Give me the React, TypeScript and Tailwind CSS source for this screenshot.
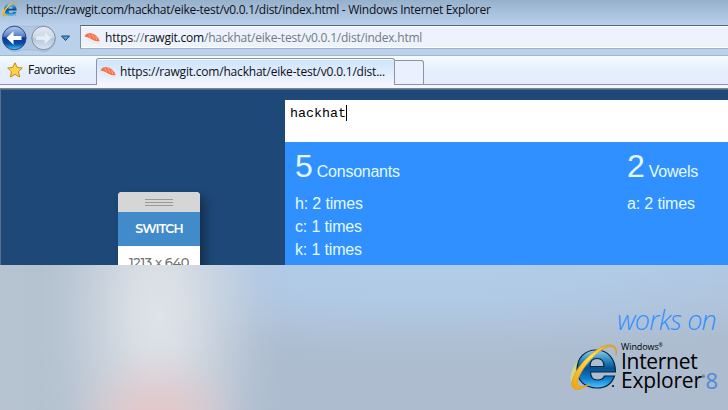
import React from "react";

const Sushi = () => (
  <svg width="16" height="14" viewBox="0 0 16 14" className="shrink-0">
    <path d="M1.5 6 Q3 8.5 7 10.5 Q12 13 15.3 11.5 L15 9 Q9 9 2 5Z" fill="#f6f1ee" stroke="#d8cfd0" strokeWidth=".4" />
    <path d="M.6 5.6 Q1.5 2 6 2 Q13 2.6 15.6 10 Q12.5 11 8.8 9 Q5 6.3 .6 5.6Z" fill="#f3734f" />
    <path d="M4.5 2.6 L6.8 6.4 M8 2.8 L10.2 8 M11.5 4.6 L12.8 9" stroke="#ffb094" strokeWidth=".8" />
  </svg>
);

const IELogo = ({ size, id }: { size: number; id: string }) => (
  <svg width={size} height={size} viewBox="0 0 50 50" className="shrink-0">
    <defs>
      <linearGradient id={id + "b"} x1="0" y1="0" x2="0" y2="1">
        <stop offset="0" stopColor="#8fd0ec" />
        <stop offset=".25" stopColor="#2f8fc8" />
        <stop offset=".48" stopColor="#07508f" />
        <stop offset=".75" stopColor="#0b7dd0" />
        <stop offset="1" stopColor="#4fc8fb" />
      </linearGradient>
      <linearGradient id={id + "g"} x1="1" y1="0" x2="0" y2="1">
        <stop offset="0" stopColor="#e59a10" />
        <stop offset=".4" stopColor="#ffe15a" />
        <stop offset="1" stopColor="#f0a20c" />
      </linearGradient>
    </defs>
    <path d="M9 17 C1 27 -2 37 3 42 L12 32Z" fill="#d8df78" opacity=".8" />
    <path
      fillRule="evenodd"
      d="M26 8 C38 8 45.5 17 45.5 30 L20.500 30 C20.500 35.500 23.500 38 27.500 38 C31.500 38 33.500 36.500 34.500 34 L44.500 34 C41.500 42.500 35.500 46 27 46 C14 46 7 38 7 27.500 C7 16 15 8 26 8Z M20 24.500 L34 24.500 C34 19 31 16.500 27 16.500 C23 16.500 20 19 20 24.500Z"
      fill={`url(#${id}b)`}
      stroke="#09233f"
      strokeWidth={size > 20 ? 1.2 : 0.4}
    />
    <path
      d="M46 13 C49 3 40 0 30 6 C16 14 4 29 2 40 C1 50 10 49 20 42 C12 46 6 45 7.500 39 C10 29 22 14 33 7 C41 2 47 5 46 13Z"
      fill={`url(#${id}g)`}
      stroke="#e39a10"
      strokeWidth=".7"
    />
    <circle cx="43" cy="44" r="1.100" fill="#111" />
  </svg>
);

const NavButtons = () => (
  <svg width="80" height="30" viewBox="0 0 80 30" className="shrink-0">
    <defs>
      <linearGradient id="back" x1="0" y1="0" x2="0" y2="1">
        <stop offset="0" stopColor="#b8cdec" />
        <stop offset=".42" stopColor="#5580c6" />
        <stop offset=".5" stopColor="#0b3490" />
        <stop offset=".75" stopColor="#0a4fae" />
        <stop offset="1" stopColor="#3fd0fa" />
      </linearGradient>
      <linearGradient id="fwd" x1="0" y1="0" x2="0" y2="1">
        <stop offset="0" stopColor="#e2eaf5" />
        <stop offset=".48" stopColor="#ccd7e6" />
        <stop offset=".52" stopColor="#b4c4d9" />
        <stop offset="1" stopColor="#d9e6f4" />
      </linearGradient>
    </defs>
    <path d="M14 .8 Q29 2 44 .8 A13 13 0 0 1 44 26.600 Q29 23 14 26.600 A13 13 0 0 1 14 .8Z" fill="#b2c8e2" stroke="#9db3d0" strokeWidth=".7" />
    <circle cx="14.3" cy="13" r="11.8" fill="url(#back)" stroke="#2a4a80" />
    <path d="M6.5 13 L13.500 6.300 V11 H21.500 V15 H13.500 V19.700Z" fill="#fff" />
    <circle cx="43.500" cy="13" r="11.700" fill="url(#fwd)" stroke="#7f8da2" />
    <path d="M51.5 13 L44.500 6.500 V11 H36 V15 H44.500 V19.500Z" fill="#e6edf6" stroke="#ccd6e4" strokeWidth=".6" />
    <path d="M61.5 11 H69.500 L65.500 15.500Z" fill="#4aa2dc" stroke="#1b4674" strokeWidth="1" />
  </svg>
);

const Chrome = () => (
  <header className="h-[90px] font-['Open_Sans','Noto_Sans',sans-serif] text-[12px] text-[#101018]">
    <div className="flex h-[25px] items-start gap-[8px] bg-linear-to-b from-[#96b1cc] to-[#bad0ec] pl-[2px] pt-[1px]">
      <IELogo size={16} id="s" />
      <span className="whitespace-pre leading-[18px] tracking-[-0.285px]">
        https://rawgit.com/hackhat/eike-test/v0.0.1/dist/index.html - Windows Internet Explorer
      </span>
    </div>
    <div className="flex h-[30px] bg-[#b9d1ea]">
      <NavButtons />
      <div className="flex h-[24px] grow items-center gap-[5px] border-y border-l border-t-[#566477] border-b-[#a3b2c6] border-l-[#7f8ea3] bg-[#ecf3fc] pl-[3px] pt-[2px] shadow-[inset_0_1px_0_#fff,inset_0_-1px_0_#fff]">
        <Sushi />
        <span className="leading-[18px] tracking-[-0.215px] text-[#737a84]">
          <span className="text-[#101018]">https</span>://<span className="text-[#101018]">rawgit.com</span>/hackhat/eike-test/v0.0.1/dist/index.html
        </span>
      </div>
    </div>
    <div className="flex h-[30px] items-start border-t border-[#a3b7ce] bg-linear-to-b from-[#f4fbff] via-[#e4effb] to-[#e7ebfd]">
      <div className="flex h-[29px] w-[96px] items-center gap-[5px] border-b border-[#8c93a6] pl-[7px]">
        <svg width="16" height="16" viewBox="0 0 16 16">
          <path d="M8 .8 L10.200 5.400 L15.300 6 L11.500 9.600 L12.600 15 L8 12.300 L3.400 15 L4.500 9.600 L.7 6 L5.800 5.400Z" fill="#ffd24c" stroke="#c88718" />
        </svg>
        <span className="tracking-[-0.4px]">Favorites</span>
      </div>
      <div className="mt-[2px] flex h-[27px] w-[299px] items-center gap-[4px] rounded-t-[3px] border-x border-t border-[#8c93a6] bg-linear-to-b from-[#cbe4fb] to-[#f4f5fe] pl-[3px] shadow-[inset_0_1px_0_#fff]">
        <Sushi />
        <span className="whitespace-nowrap tracking-[-0.2px]">https://rawgit.com/hackhat/eike-test/v0.0.1/dist...</span>
      </div>
      <div className="mt-[4px] h-[25px] w-[29px] rounded-tr-[3px] border-b border-r border-t border-[#8c93a6] bg-[#eaf0fd]" />
      <div className="h-[29px] grow border-b border-[#8c93a6]" />
    </div>
    <div className="h-[3px] bg-[#f4f5fd]" />
    <div className="h-[2px] bg-linear-to-b from-[#8c929c] to-[#455b72]" />
  </header>
);

const Count = ({ n, label, rows }: { n: number; label: string; rows: string[] }) => (
  <div className="w-[332px] shrink-0">
    <div className="h-[46px] pt-[4px] leading-[40px]">
      <span className="text-[32px]">{n}</span>
      <span className="ml-[4px] text-[16px] tracking-[-0.25px]">{label}</span>
    </div>
    {rows.map((r) => (
      <div key={r} className="h-[23px] text-[16px] leading-[31px] tracking-[-0.15px]">{r}</div>
    ))}
  </div>
);

export default function App() {
  return (
    <div className="h-[410px] w-[728px] overflow-hidden">
      <Chrome />
      <main className="flex h-[175px] overflow-hidden border-l border-[#59708a] bg-[#1d4877]">
        <div className="h-full w-[284px] pl-[117px] pt-[102px]">
          <div className="h-[90px] w-[82px] overflow-hidden rounded-t-[4px] bg-white text-center font-[Montserrat,Lato,sans-serif] shadow-[5px_5px_10px_rgba(0,0,0,0.35)]">
            <div className="flex h-[20px] flex-col items-center gap-[2px] bg-[#d6d6d6] pt-[7px]">
              <i className="h-px w-[28px] bg-[#999]" />
              <i className="h-px w-[28px] bg-[#999]" />
              <i className="h-px w-[28px] bg-[#999]" />
            </div>
            <div className="h-[34px] bg-[#428bca] text-[12.5px] font-semibold leading-[34px] tracking-[-0.8px] text-white">SWITCH</div>
            <div className="pt-[6px] text-[13px] font-medium leading-[20px] tracking-[-0.4px] text-[#737373]">1213 x 640</div>
          </div>
        </div>
        <div className="w-[443px] pt-[10px] font-['Liberation_Sans',Arial,sans-serif] text-[#e3fbff]">
          <div className="flex h-[42px] items-start bg-white pl-[5px] pt-[5px]">
            <span className="pt-px font-['Liberation_Mono',monospace] text-[13.33px] leading-[16px] text-black">hackhat</span>
            <i className="h-[16px] w-px bg-black" />
          </div>
          <div className="flex h-[123px] overflow-hidden bg-[#3090ff] pl-[10px]">
            <Count n={5} label="Consonants" rows={["h: 2 times", "c: 1 times", "k: 1 times"]} />
            <Count n={2} label="Vowels" rows={["a: 2 times"]} />
          </div>
        </div>
      </main>
      <footer className="flex h-[145px] flex-col items-end bg-[#adbccf] bg-[radial-gradient(ellipse_100px_85px_at_157px_160px,#e5c5c6_0%,#e5c5c6cc_25%,#e5c5c666_55%,#e5c5c61a_82%,#e5c5c600_100%),radial-gradient(ellipse_125px_260px_at_158px_50px,#dfe3e8_0%,#dfe3e8d8_22%,#dfe3e880_48%,#dfe3e81a_80%,#dfe3e800_100%),linear-gradient(to_right,#b7c4d0_0%,#b0becf_14%,#adbccf00_40%),radial-gradient(ellipse_460px_100px_at_430px_0px,#b1cce9_0%,#b1cce9bb_35%,#b1cce944_70%,#b1cce900_100%),linear-gradient(to_bottom,#b1c7e1_0%,#b1c7e100_50%)] pr-[10px] pt-[37px]">
        <div className="pr-[2px] font-['Open_Sans',sans-serif] text-[27px] font-light italic leading-[36px] tracking-[-0.8px] text-[#3090ff]">works on</div>
        <div className="-mt-[2px] flex">
          <div className="pt-[6px]"><IELogo size={50} id="l" /></div>
          <div className="w-[98px] pl-px pt-[5px] font-['Open_Sans',sans-serif] text-black">
            <div className="flex text-[9px] leading-[11px] tracking-[-0.1px]">
              Windows<span className="text-[5px] leading-[8px]">®</span>
            </div>
            <div className="text-[21px] leading-[19px] tracking-[-0.3px]">Internet</div>
            <div className="flex text-[21px] leading-[19px]">
              <span className="tracking-[-0.2px]">Explorer</span>
              <span className="w-[4px] text-[4px] leading-[12px]">®</span>
              <span className="text-[22px] text-[#4c8bd4]">8</span>
            </div>
          </div>
        </div>
      </footer>
    </div>
  );
}
